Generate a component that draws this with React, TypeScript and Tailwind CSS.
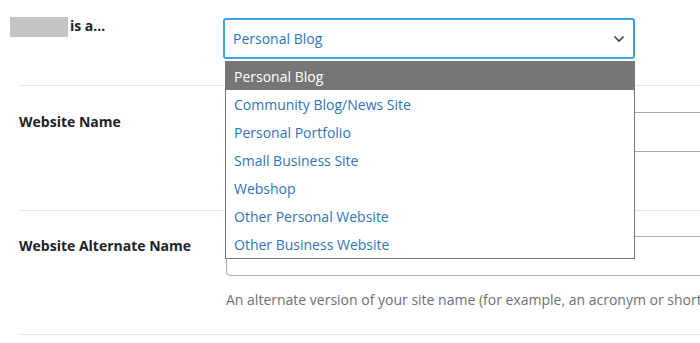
const options = [
  "Personal Blog",
  "Community Blog/News Site",
  "Personal Portfolio",
  "Small Business Site",
  "Webshop",
  "Other Personal Website",
  "Other Business Website",
];

function Chevron() {
  return (
    <svg width="12" height="8" viewBox="0 0 12 8" fill="none">
      <path d="M1.5 1.5 6 6l4.5-4.5" stroke="#3c434a" strokeWidth="1.6" />
    </svg>
  );
}

export default function App() {
  return (
    <div className="w-[700px] h-[343px] overflow-hidden bg-white font-['Open_Sans',sans-serif] text-[14px] text-[#1d2327]">
      <div className="ml-[19px]">
        {/* site type */}
        <div className="relative flex h-[86px] border-b border-[#e3e3e6]">
          <div className="w-[213px] shrink-0 pt-[17px] -ml-[9px] flex items-start h-fit font-bold">
            <span className="inline-block w-[58px] h-[20px] bg-[#c4c4c4]" />
            <span className="ml-[2px] leading-[20px] -mt-[1px]">is a...</span>
          </div>
          <div className="pt-[18px] shrink-0">
            <div className="w-[412px] h-[41px] border-2 border-[#3ba3e3] rounded-[3px] flex items-center justify-between pl-[8px] pr-[8px] text-[#2f74b8]">
              <span>Personal Blog</span>
              <Chevron />
            </div>
          </div>
          <div className="absolute left-[206px] top-[61px] z-10 w-[410px] border border-[#767676] bg-white">
            {options.map((o, i) => (
              <div
                key={o}
                className={
                  i === 0
                    ? "h-[28px] pl-[8px] pt-[1px] flex items-center bg-[#767676] text-white"
                    : "h-[28px] pl-[8px] pt-[1px] flex items-center text-[#2f74b8]"
                }
              >
                {o}
              </div>
            ))}
          </div>
        </div>

        {/* website name */}
        <div className="flex h-[125px] border-b border-[#e3e3e6]">
          <div className="w-[207px] shrink-0 pt-[26px] font-bold leading-[20px] whitespace-nowrap">Website Name</div>
          <div className="pt-[26px] shrink-0">
            <div className="w-[500px] h-[40px] border border-[#a7aaad] rounded-[4px]" />
          </div>
        </div>

        {/* alternate name */}
        <div className="flex h-[124px] border-b border-[#e3e3e6]">
          <div className="w-[207px] shrink-0 pt-[25px] font-bold leading-[20px] whitespace-nowrap">Website Alternate Name</div>
          <div className="pt-[25px] shrink-0">
            <div className="w-[500px] h-[40px] border border-[#a7aaad] rounded-[4px]" />
            <p className="mt-[14px] leading-[20px] text-[#6c7177] whitespace-nowrap">
              An alternate version of your site name (for example, an acronym or shorter name).
            </p>
          </div>
        </div>
      </div>
    </div>
  );
}
